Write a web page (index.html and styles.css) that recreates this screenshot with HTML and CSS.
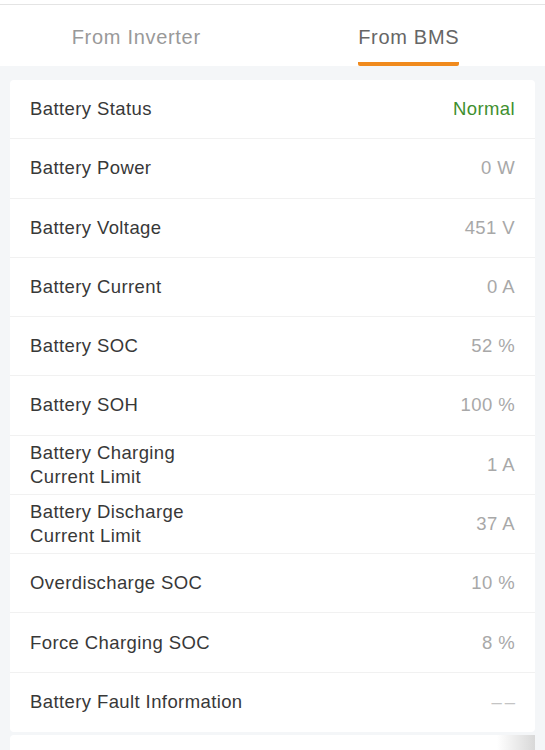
FILE: index.html
```html
<!DOCTYPE html>
<html lang="en">
<head>
  <meta charset="UTF-8" />
  <title>Battery Information</title>
  <link rel="stylesheet" href="styles.css">
</head>
<body>

<div class="top-line"></div>

<div class="tabs">
  <div class="tab">From Inverter</div>
  <div class="tab active"><span>From BMS</span></div>
</div>

<div class="content">
  <div class="card">
    <div class="row"><span class="label">Battery Status</span><span class="value ok">Normal</span></div>
    <div class="row"><span class="label">Battery Power</span><span class="value">0 W</span></div>
    <div class="row"><span class="label">Battery Voltage</span><span class="value">451 V</span></div>
    <div class="row"><span class="label">Battery Current</span><span class="value">0 A</span></div>
    <div class="row"><span class="label">Battery SOC</span><span class="value">52 %</span></div>
    <div class="row"><span class="label">Battery SOH</span><span class="value">100 %</span></div>
    <div class="row"><span class="label">Battery Charging<br>Current Limit</span><span class="value">1 A</span></div>
    <div class="row"><span class="label">Battery Discharge<br>Current Limit</span><span class="value">37 A</span></div>
    <div class="row"><span class="label">Overdischarge SOC</span><span class="value">10 %</span></div>
    <div class="row"><span class="label">Force Charging SOC</span><span class="value">8 %</span></div>
    <div class="row"><span class="label">Battery Fault Information</span><span class="value dash">––</span></div>
  </div>

  <div class="card next">
    <div class="fade"></div>
  </div>
</div>

</body>
</html>
```

FILE: styles.css
```css
body {
  margin: 0;
  font-family: "Liberation Sans", Arial, sans-serif;
  background-color: #f4f6f8;
  overflow: hidden;
}

.top-line {
  height: 4px;
  background: #fff;
  border-bottom: 1px solid #e4e4e4;
}

/* Tabs */
.tabs {
  display: flex;
  height: 61px;
  background: #fff;
}

.tab {
  flex: 1;
  display: flex;
  justify-content: center;
  padding-top: 21px;
  box-sizing: border-box;
  font-size: 20px;
  color: #999;
  letter-spacing: 0.7px;
}

.tab.active {
  color: #666;
}

.tab.active span {
  height: 40px;
  border-bottom: 4px solid #f08a1d;
  border-radius: 0 0 2px 2px;
  box-sizing: border-box;
}

/* Card list */
.content {
  padding: 14px 10px 0;
}

.card {
  background: #fff;
  border-radius: 4px;
}

.row {
  display: flex;
  align-items: center;
  justify-content: space-between;
  height: 59.27px;
  padding: 0 20px;
  box-sizing: border-box;
  border-bottom: 1px solid #f1f1f1;
}

.row:last-child {
  border-bottom: none;
}

.label {
  font-size: 18.5px;
  line-height: 24px;
  color: #383838;
  letter-spacing: 0.4px;
}

.value {
  font-size: 18.5px;
  color: #a8a8a8;
  letter-spacing: 0.4px;
}

.value.ok {
  color: #3f8f2f;
}

.value.dash {
  color: #c4c4c4;
  letter-spacing: 3px;
  margin-right: -3px;
}

.card.next {
  margin-top: 3px;
  height: 40px;
  display: flex;
  justify-content: flex-end;
}

.fade {
  width: 38px;
  background: linear-gradient(to right, #fff, #d8d8d8);
}
```
